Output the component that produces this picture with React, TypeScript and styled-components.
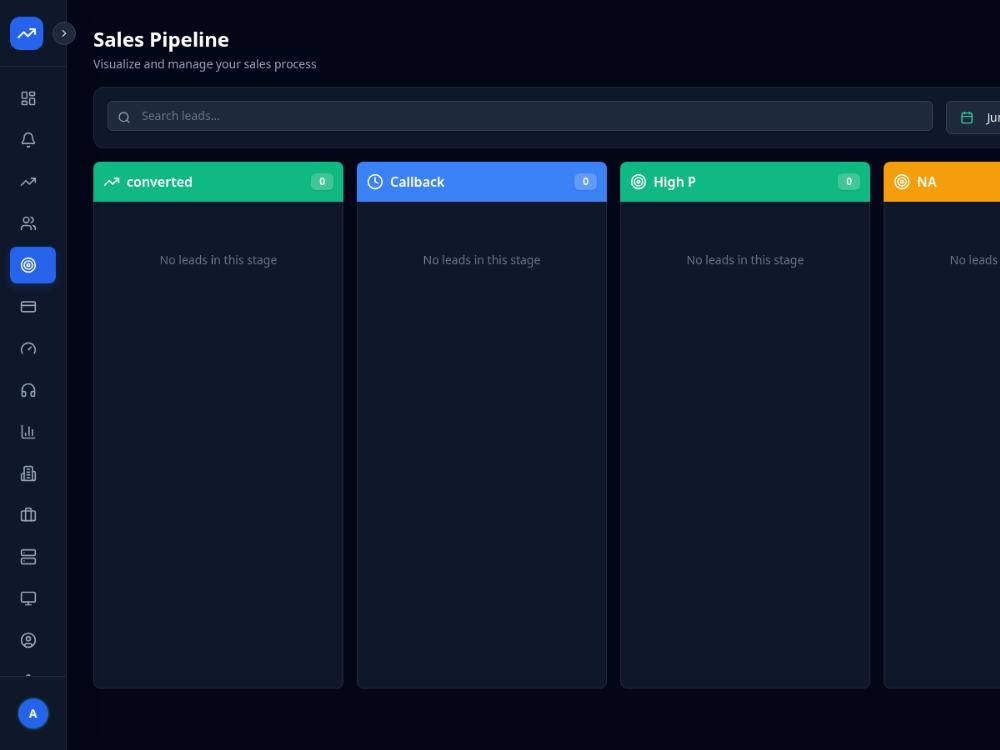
import React from "react";
import styled, { createGlobalStyle } from "styled-components";
import {
  LayoutDashboard, Bell, TrendingUp, Users, Target, CreditCard, Headphones, ChartColumn,
  Briefcase, Server, Monitor, CircleUser, ChevronRight, Search, Calendar, Clock, LucideIcon,
} from "lucide-react";

const GlobalStyle = createGlobalStyle`
  *, *::before, *::after { box-sizing: border-box; }
  html { font-size: 16px; }
  body {
    margin: 0;
    overflow: hidden;
    background: #020617;
    color: #f8fafc;
    font-family: "Noto Sans", sans-serif;
  }
  svg { display: block; flex: none; }
`;

const Viewport = styled.div`
  width: 100vw;
  height: 100vh;
  overflow: hidden;
`;

/* The whole interface is shown at about five sixths of its natural size. */
const Shell = styled.div`
  display: flex;
  width: 120vw;
  height: 120vh;
  overflow: hidden;
  background: #020617;
  transform: scale(0.8336);
  transform-origin: 0 0;
  will-change: transform;
`;

const Sidebar = styled.aside`
  position: relative;
  z-index: 1;
  display: flex;
  flex-direction: column;
  flex: none;
  width: 5rem;
  height: 100%;
  background: #0f172a;
  border-right: 1px solid #1e293b;
  box-shadow: 0 1.5rem 3rem -0.75rem rgba(0, 0, 0, 0.25);
`;

const SidebarHeader = styled.div`
  display: flex;
  align-items: center;
  flex: none;
  height: 5rem;
  padding: 0 0.75rem;
  border-bottom: 1px solid #1e293b;
`;

const Logo = styled.div`
  display: grid;
  place-items: center;
  width: 2.5rem;
  height: 2.5rem;
  border-radius: 0.75rem;
  background: #2563eb;
  color: #fff;
`;

const CollapseButton = styled.button`
  position: absolute;
  top: 1.625rem;
  right: -0.75rem;
  display: grid;
  place-items: center;
  width: 1.75rem;
  height: 1.75rem;
  padding: 0;
  border: 1px solid #334155;
  border-radius: 50%;
  background: #1e293b;
  color: #cbd5e1;
`;

const Nav = styled.nav`
  display: flex;
  flex-direction: column;
  flex: 1;
  min-height: 0;
  gap: 0.375rem;
  padding: 1rem 0.75rem 0;
  overflow: hidden;
`;

const NavItem = styled.a<{ $active?: boolean }>`
  display: flex;
  align-items: center;
  flex: none;
  height: 2.75rem;
  padding-left: 0.75rem;
  border-radius: 0.5rem;
  color: ${(p) => (p.$active ? "#fff" : "#94a3b8")};
  background: ${(p) => (p.$active ? "#2563eb" : "transparent")};
  box-shadow: ${(p) => (p.$active ? "0 0.25rem 0.75rem rgba(37, 99, 235, 0.2)" : "none")};
`;

const SidebarFooter = styled.div`
  display: grid;
  place-items: center;
  flex: none;
  height: 5.5625rem;
  border-top: 1px solid #1e293b;
`;

const Avatar = styled.div`
  display: grid;
  place-items: center;
  width: 2.25rem;
  height: 2.25rem;
  border-radius: 50%;
  background: #2563eb;
  box-shadow: 0 0 0 2px rgba(16, 185, 129, 0.2);
  font-size: 0.875rem;
  font-weight: 700;
  line-height: 1;
`;

const Main = styled.main`
  flex: 1;
  min-width: 0;
  padding: 1.9375rem 0 0 2rem;
  overflow: hidden;
`;

const Title = styled.h1`
  margin: 0;
  font-size: 1.5rem;
  font-weight: 700;
  line-height: 2rem;
  color: #fff;
`;

const Subtitle = styled.p`
  margin: 0.1875rem 0 1rem;
  font-size: 0.875rem;
  line-height: 1.375rem;
  color: #94a3b8;
`;

const FilterBar = styled.section`
  display: flex;
  gap: 1rem;
  width: 96rem;
  height: 4.625rem;
  margin-bottom: 1rem;
  padding: 1rem;
  border: 1px solid #1e293b;
  border-radius: 0.75rem;
  background: #0f172a;
`;

const SearchField = styled.label`
  position: relative;
  flex: none;
  width: 61.875rem;
`;

const SearchIcon = styled(Search)`
  position: absolute;
  top: 0.75rem;
  left: 0.75rem;
  color: #94a3b8;
`;

const SearchInput = styled.input`
  display: block;
  width: 100%;
  height: 2.25rem;
  padding: 0 0.75rem 0.125rem 2.5rem;
  border: 1px solid #334155;
  border-radius: 0.375rem;
  background: #1e293b;
  color: #fff;
  font: 0.875rem "Noto Sans", sans-serif;
  &::placeholder { color: #64748b; opacity: 1; }
`;

const DateButton = styled.button`
  display: flex;
  align-items: center;
  flex: none;
  gap: 1rem;
  height: 2.5rem;
  padding: 0 1rem;
  border: 1px solid #334155;
  border-radius: 0.375rem;
  background: #1e293b;
  color: #e2e8f0;
  font: 0.875rem "Noto Sans", sans-serif;
  white-space: nowrap;
  svg { color: #34d399; }
`;

const DateLabel = styled.span`
  padding-bottom: 0.125rem;
`;

const Board = styled.div`
  display: flex;
  gap: 1rem;
`;

const Column = styled.section`
  display: flex;
  flex-direction: column;
  flex: none;
  width: 18.75rem;
  height: 39.5rem;
`;

const ColumnHeader = styled.header<{ $color: string }>`
  display: flex;
  align-items: center;
  gap: 0.5rem;
  flex: none;
  height: 3rem;
  padding: 0 0.75rem;
  border-radius: 0.5rem 0.5rem 0 0;
  background: ${(p) => p.$color};
  color: #fff;
`;

const ColumnTitle = styled.h2`
  flex: 1;
  margin: 0;
  font-size: 1rem;
  font-weight: 600;
  line-height: 1.5rem;
`;

const Count = styled.span`
  padding: 0 0.625rem;
  border-radius: 0.375rem;
  background: rgba(255, 255, 255, 0.2);
  box-shadow: 0 1px 2px rgba(0, 0, 0, 0.1);
  font-size: 0.75rem;
  font-weight: 600;
  line-height: 1.25rem;
`;

const ColumnBody = styled.div`
  flex: 1;
  padding-top: 3.75rem;
  border: 1px solid #1e293b;
  border-top: 0;
  border-radius: 0 0 0.5rem 0.5rem;
  background: #0f172a;
  color: #64748b;
  font-size: 0.875rem;
  line-height: 1.25rem;
  text-align: center;
`;

type IconProps = { size?: string | number };

const StrokeIcon = ({ size, children }: IconProps & { children: React.ReactNode }) => (
  <svg width={size} height={size} viewBox="0 0 24 24" fill="none" stroke="currentColor"
    strokeWidth="2" strokeLinecap="round" strokeLinejoin="round">
    {children}
  </svg>
);

const DialIcon = ({ size }: IconProps) => (
  <StrokeIcon size={size}>
    <path d="m12 14 4-4" />
    <path d="M3.34 19a10 10 0 1 1 17.32 0" />
  </StrokeIcon>
);

const OfficeIcon = ({ size }: IconProps) => (
  <StrokeIcon size={size}>
    <path d="M6 22V4a2 2 0 0 1 2-2h8a2 2 0 0 1 2 2v18Z" />
    <path d="M6 12H4a2 2 0 0 0-2 2v6a2 2 0 0 0 2 2h2" />
    <path d="M18 9h2a2 2 0 0 1 2 2v9a2 2 0 0 1-2 2h-2" />
    <path d="M10 6h4M10 10h4M10 14h4M10 18h4" />
  </StrokeIcon>
);

const GearIcon = ({ size }: IconProps) => (
  <StrokeIcon size={size}>
    <path d="M12.22 2h-.44a2 2 0 0 0-2 2v.18a2 2 0 0 1-1 1.73l-.43.25a2 2 0 0 1-2 0l-.15-.08a2 2 0 0 0-2.73.73l-.22.38a2 2 0 0 0 .73 2.73l.15.1a2 2 0 0 1 1 1.72v.51a2 2 0 0 1-1 1.74l-.15.09a2 2 0 0 0-.73 2.73l.22.38a2 2 0 0 0 2.73.73l.15-.08a2 2 0 0 1 2 0l.43.25a2 2 0 0 1 1 1.73V20a2 2 0 0 0 2 2h.44a2 2 0 0 0 2-2v-.18a2 2 0 0 1 1-1.73l.43-.25a2 2 0 0 1 2 0l.15.08a2 2 0 0 0 2.73-.73l.22-.39a2 2 0 0 0-.73-2.73l-.15-.08a2 2 0 0 1-1-1.74v-.5a2 2 0 0 1 1-1.74l.15-.09a2 2 0 0 0 .73-2.73l-.22-.38a2 2 0 0 0-2.73-.73l-.15.08a2 2 0 0 1-2 0l-.43-.25a2 2 0 0 1-1-1.73V4a2 2 0 0 0-2-2z" />
    <circle cx="12" cy="12" r="3" />
  </StrokeIcon>
);

const navIcons: React.ComponentType<IconProps>[] = [
  LayoutDashboard, Bell, TrendingUp, Users, Target, CreditCard, DialIcon, Headphones,
  ChartColumn, OfficeIcon, Briefcase, Server, Monitor, CircleUser, GearIcon,
];

const stages: { name: string; color: string; icon: LucideIcon }[] = [
  { name: "converted", color: "#10b981", icon: TrendingUp },
  { name: "Callback", color: "#3b82f6", icon: Clock },
  { name: "High P", color: "#10b981", icon: Target },
  { name: "NA", color: "#f59e0b", icon: Target },
];

export default function App() {
  return (
    <Viewport>
      <GlobalStyle />
      <Shell>
        <Sidebar>
          <SidebarHeader>
            <Logo><TrendingUp size="1.5rem" /></Logo>
          </SidebarHeader>
          <CollapseButton aria-label="Expand sidebar"><ChevronRight size="0.875rem" /></CollapseButton>
          <Nav>
            {navIcons.map((Icon, i) => (
              <NavItem key={i} $active={i === 4}><Icon size="1.25rem" /></NavItem>
            ))}
          </Nav>
          <SidebarFooter><Avatar>A</Avatar></SidebarFooter>
        </Sidebar>
        <Main>
          <Title>Sales Pipeline</Title>
          <Subtitle>Visualize and manage your sales process</Subtitle>
          <FilterBar>
            <SearchField>
              <SearchInput placeholder="Search leads..." />
              <SearchIcon size="1rem" />
            </SearchField>
            <DateButton><Calendar size="1rem" /><DateLabel>Jun 1 - Jun 30</DateLabel></DateButton>
          </FilterBar>
          <Board>
            {stages.map(({ name, color, icon: Icon }) => (
              <Column key={name}>
                <ColumnHeader $color={color}>
                  <Icon size="1.25rem" />
                  <ColumnTitle>{name}</ColumnTitle>
                  <Count>0</Count>
                </ColumnHeader>
                <ColumnBody>No leads in this stage</ColumnBody>
              </Column>
            ))}
          </Board>
        </Main>
      </Shell>
    </Viewport>
  );
}
